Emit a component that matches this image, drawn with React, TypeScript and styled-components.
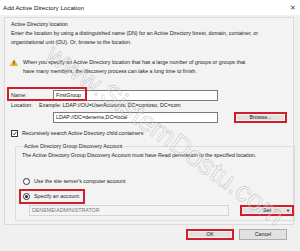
import React from 'react';
import styled, { createGlobalStyle } from 'styled-components';

const GlobalStyle = createGlobalStyle`
  html, body {
    margin: 0;
    padding: 0;
    background: #f0f0f0;
  }
  body {
    font-family: 'Liberation Sans', Arial, sans-serif;
    color: #1a1a1a;
  }
`;

const Window = styled.div`
  position: relative;
  width: 300px;
  height: 251px;
  overflow: hidden;
  background: #f0f0f0;
  display: flex;
  flex-direction: column;
`;

const TitleBar = styled.div`
  height: 15px;
  flex: none;
  background: #ffffff;
  display: flex;
  align-items: center;
  justify-content: space-between;
  padding: 0 4px 0 3px;
  font-size: 6.2px;
  color: #111;
`;

const Close = styled.span`
  font-size: 7px;
  color: #444;
`;

const Body = styled.div`
  padding: 2px 6px 0 4px;
  display: flex;
  flex-direction: column;
`;

const Frame = styled.div`
  border: 1px solid #dadada;
  background: #f3f3f3;
  padding: 2px 4px 3px 6px;
  font-size: 5.3px;
  line-height: 9px;
`;

const Heading = styled.div``;

const Warning = styled.div`
  display: flex;
  align-items: flex-start;
  gap: 5px;
  margin: 11px 0 0 -1px;
`;

const FieldRow = styled.div<{ $top?: number }>`
  position: relative;
  display: flex;
  align-items: center;
  margin-top: ${(p) => p.$top ?? 0}px;
`;

const Label = styled.span<{ $width?: number }>`
  width: ${(p) => p.$width ?? 42}px;
  flex: none;
`;

const Input = styled.div<{ $width: number; $disabled?: boolean }>`
  width: ${(p) => p.$width}px;
  height: 11px;
  box-sizing: border-box;
  border: 1px solid ${(p) => (p.$disabled ? '#d4d4d4' : '#7a7a7a')};
  background: ${(p) => (p.$disabled ? '#f4f4f4' : '#ffffff')};
  color: ${(p) => (p.$disabled ? '#777' : '#111')};
  padding-left: 2px;
  line-height: 9px;
  flex: none;
`;

const Button = styled.div<{ $width: number; $marked?: boolean; $left?: number }>`
  width: ${(p) => p.$width}px;
  height: 11px;
  box-sizing: border-box;
  margin-left: ${(p) => p.$left ?? 0}px;
  border: ${(p) => (p.$marked ? '2px solid #cf1f2c' : '1px solid #adadad')};
  background: #e1e1e1;
  box-shadow: ${(p) => (p.$marked ? 'inset 0 0 0 1px #f2f2f2' : 'none')};
  display: flex;
  align-items: center;
  justify-content: center;
  line-height: 7px;
  font-size: 5.3px;
  flex: none;
  position: relative;
`;

const Caret = styled.span`
  position: absolute;
  right: 2px;
  font-size: 4px;
  color: #111;
`;

const NameMark = styled.div`
  position: absolute;
  left: -4px;
  top: -3px;
  width: 80px;
  height: 14px;
  box-sizing: border-box;
  border: 2px solid #cf1f2c;
  pointer-events: none;
`;

const CheckRow = styled.div`
  display: flex;
  align-items: center;
  gap: 4px;
  margin-top: 6px;
`;

const Box = styled.span`
  width: 7px;
  height: 7px;
  box-sizing: border-box;
  border: 1px solid #333;
  background: #fff;
  display: flex;
  align-items: center;
  justify-content: center;
`;

const Group = styled.fieldset`
  margin: 4px 0 0 4px;
  width: 280px;
  box-sizing: border-box;
  border: 1px solid #dcdcdc;
  padding: 0 3px 4px 6px;
  min-width: 0;
`;

const Legend = styled.legend`
  padding: 0 1px;
  margin-left: 1px;
`;

const RadioRow = styled.div<{ $top: number; $marked?: boolean }>`
  display: inline-flex;
  align-items: center;
  gap: 4px;
  margin-top: ${(p) => p.$top}px;
  padding: 1px 3px 1px 2px;
  margin-left: -3px;
  border: 2px solid ${(p) => (p.$marked ? '#cf1f2c' : 'transparent')};
  align-self: flex-start;
`;

const Radio = styled.span<{ $checked?: boolean }>`
  width: 7px;
  height: 7px;
  box-sizing: border-box;
  border-radius: 50%;
  border: 1px solid #333;
  background: #fff;
  display: flex;
  align-items: center;
  justify-content: center;
  &::after {
    content: '';
    width: 3px;
    height: 3px;
    border-radius: 50%;
    background: ${(p) => (p.$checked ? '#222' : 'transparent')};
  }
`;

const GroupInner = styled.div`
  display: flex;
  flex-direction: column;
`;

const Footer = styled.div`
  display: flex;
  justify-content: flex-end;
  gap: 5px;
  padding: 4px 7px 0 0;
`;

const Watermark = styled.div`
  position: absolute;
  left: 22px;
  top: 119px;
  transform: rotate(36deg);
  transform-origin: center;
  font-size: 28px;
  white-space: nowrap;
  color: rgba(255, 255, 255, 0.3);
  -webkit-text-stroke: 0.6px rgba(80, 80, 80, 0.32);
  pointer-events: none;
`;

const WarnIcon = () => (
  <svg width="8" height="7" viewBox="0 0 16 14" style={{ flex: 'none', marginTop: 1 }}>
    <path d="M8 0.8 L15.4 13.4 H0.6 Z" fill="#f3c623" stroke="#b58a12" strokeWidth="0.8" />
    <rect x="7.1" y="4.5" width="1.8" height="5" fill="#222" />
    <rect x="7.1" y="10.5" width="1.8" height="1.7" fill="#222" />
  </svg>
);

const Tick = () => (
  <svg width="5" height="5" viewBox="0 0 10 10">
    <path d="M1.5 5.2 L4 7.8 L8.8 2" fill="none" stroke="#222" strokeWidth="1.6" />
  </svg>
);

export default function App() {
  return (
    <>
      <GlobalStyle />
      <Window>
        <TitleBar>
          <span>Add Active Directory Location</span>
          <Close>✕</Close>
        </TitleBar>
        <Body>
          <Frame>
            <Heading>Active Directory location</Heading>
            <div>
              Enter the location by using a distinguished name (DN) for an Active Directory forest, domain, container, or
              <br />
              organizational unit (OU). Or, browse to the location.
            </div>
            <Warning>
              <WarnIcon />
              <div>
                When you specify an Active Directory location that has a large number of groups or groups that
                <br />
                have many members, the discovery process can take a long time to finish.
              </div>
            </Warning>
            <FieldRow $top={14}>
              <NameMark />
              <Label>Name:</Label>
              <Input $width={165}>FirstGroup</Input>
            </FieldRow>
            <FieldRow>
              <Label $width={28}>Location:</Label>
              <span>Example: LDAP://OU=UserAccounts, DC=contoso, DC=com</span>
            </FieldRow>
            <FieldRow $top={2}>
              <Label />
              <Input $width={165}>LDAP://DC=deneme,DC=local</Input>
              <Button $width={53} $left={16} $marked>
                Browse...
              </Button>
            </FieldRow>
            <CheckRow>
              <Box>
                <Tick />
              </Box>
              <span>Recursively search Active Directory child containers</span>
            </CheckRow>
            <Group>
              <Legend>Active Directory Group Discovery Account</Legend>
              <GroupInner>
                <div>The Active Directory Group Discovery Account must have Read permission to the specified location.</div>
                <RadioRow $top={14}>
                  <Radio />
                  <span>Use the site server's computer account</span>
                </RadioRow>
                <RadioRow $top={0} $marked>
                  <Radio $checked />
                  <span>Specify an account:</span>
                </RadioRow>
                <FieldRow $top={1}>
                  <Label $width={7} />
                  <Input $width={200} $disabled>
                    DENEME\ADMINISTRATOR
                  </Input>
                  <Button $width={54} $left={11} $marked>
                    Set
                    <Caret>▼</Caret>
                  </Button>
                </FieldRow>
              </GroupInner>
            </Group>
          </Frame>
          <Footer>
            <Button $width={48} $marked>
              OK
            </Button>
            <Button $width={48}>Cancel</Button>
          </Footer>
        </Body>
        <Watermark>www.SistemDostu.com</Watermark>
      </Window>
    </>
  );
}
